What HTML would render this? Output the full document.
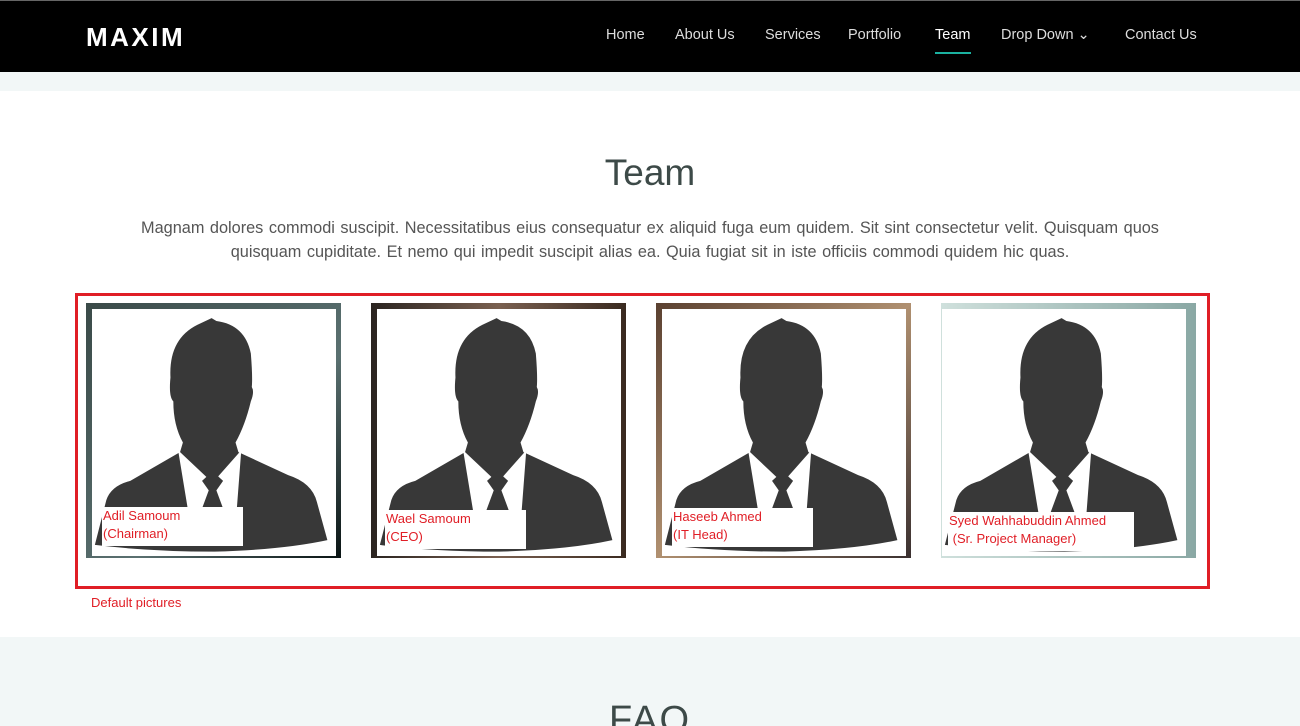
<!DOCTYPE html>
<html style="overflow:hidden"><head><style>
body{margin:0;width:1300px;height:726px;overflow:hidden;font-family:"Liberation Sans",sans-serif;background:#fff;position:relative}
.hdr{position:absolute;left:0;top:0;width:1300px;height:72px;background:#000;border-top:1px solid #666;box-sizing:border-box}
.logo{position:absolute;left:86px;top:21px;color:#fff;font-weight:bold;font-size:26px;letter-spacing:2.5px}
.nav a{position:absolute;top:26px;color:#ddd;font-size:14.5px;text-decoration:none}
.strip{position:absolute;left:0;top:72px;width:1300px;height:19px;background:#f2f7f7}
h2{position:absolute;top:152px;left:0;width:1300px;text-align:center;margin:0;font-weight:normal;font-size:37px;color:#3d4a48}
.p{position:absolute;top:216px;left:120px;width:1060px;text-align:center;color:#555;font-size:16.3px;line-height:24px;word-spacing:1px}
.box{position:absolute;left:75px;top:293px;width:1135px;height:296px;border:3px solid #e01e26;box-sizing:border-box}
.card{position:absolute;top:303px;width:255px;height:255px}
.lbl{position:absolute;background:#fff;color:#e01e26;font-size:13px;line-height:18px;padding-left:1px}
.faq{position:absolute;left:0;top:637px;width:1300px;height:89px;background:#f2f7f7;overflow:hidden}
</style></head><body>
<div class="hdr"><div class="logo">MAXIM</div>
<div class="nav"><a style="left:606px">Home</a><a style="left:675px">About Us</a><a style="left:765px">Services</a><a style="left:848px">Portfolio</a><a style="left:935px;color:#fff">Team</a><a style="left:1001px">Drop Down &#8964;</a><a style="left:1125px">Contact Us</a></div>
<div style="position:absolute;left:935px;top:51px;width:36px;height:2px;background:#1bb1a0"></div></div>
<div class="strip"></div>
<h2>Team</h2>
<div class="p">Magnam dolores commodi suscipit. Necessitatibus eius consequatur ex aliquid fuga eum quidem. Sit sint consectetur velit. Quisquam quos<br>quisquam cupiditate. Et nemo qui impedit suscipit alias ea. Quia fugiat sit in iste officiis commodi quidem hic quas.</div>
<div class="box"></div>
<svg width="0" height="0" style="position:absolute"><defs><symbol id="m" viewBox="0 0 255 255">
<path fill="#383838" d="M3 245 L15 198 Q20 183 40 178 L92 148 L95 138 Q85 120 85 95 Q80 90 82 70 Q80 30 110 15 L125 8 L130 11 Q160 15 166 45 Q168 70 167 80 Q170 85 166 95 Q160 120 150 138 L153 148 L205 172 Q230 180 235 200 L246 240 Q200 250 128 252 Q60 252 3 245Z"/>
<path fill="#fff" d="M90 146 L103 225 L150 225 L156 146 L126 180Z"/>
<path fill="#383838" d="M115 178 L126 168 L137 178 L130 188 L140 215 L126 225 L112 215 L122 188Z"/>
</symbol></defs></svg>
<div class="card" style="left:86px;background:linear-gradient(135deg,#3a4a48,#5a7070 60%,#0a1414)"><div style="position:absolute;left:6px;top:6px;width:244px;height:247px;background:#fff"><svg width="244" height="247"><use href="#m"/></svg></div><div class="lbl" style="left:16px;top:204px;width:140px;height:39px">Adil Samoum<br>(Chairman)</div></div>
<div class="card" style="left:371px;background:linear-gradient(90deg,#2a2420,#7a6050 50%,#3a2a20)"><div style="position:absolute;left:6px;top:6px;width:244px;height:247px;background:#fff"><svg width="244" height="247"><use href="#m"/></svg></div><div class="lbl" style="left:14px;top:207px;width:140px;height:39px">Wael Samoum<br>(CEO)</div></div>
<div class="card" style="left:656px;background:linear-gradient(135deg,#5a4030,#b09070 50%,#3a3030)"><div style="position:absolute;left:6px;top:6px;width:244px;height:247px;background:#fff"><svg width="244" height="247"><use href="#m"/></svg></div><div class="lbl" style="left:16px;top:205px;width:140px;height:39px">Haseeb Ahmed<br>(IT Head)</div></div>
<div class="card" style="left:941px;background:linear-gradient(90deg,#cfe0dc,#8aa8a4)"><div style="position:absolute;left:1px;top:6px;width:244px;height:247px;background:#fff"><svg width="244" height="247"><use href="#m"/></svg></div><div class="lbl" style="left:7px;top:209px;width:185px;height:39px">Syed Wahhabuddin Ahmed<br>&nbsp;(Sr. Project Manager)</div></div>
<div style="position:absolute;left:91px;top:595px;color:#e01e26;font-size:13px">Default pictures</div>
<div class="faq"><div style="position:absolute;top:62px;width:1300px;text-align:center;font-size:38px;color:#3d4a48;letter-spacing:2px">FAQ</div></div>
</body></html>
